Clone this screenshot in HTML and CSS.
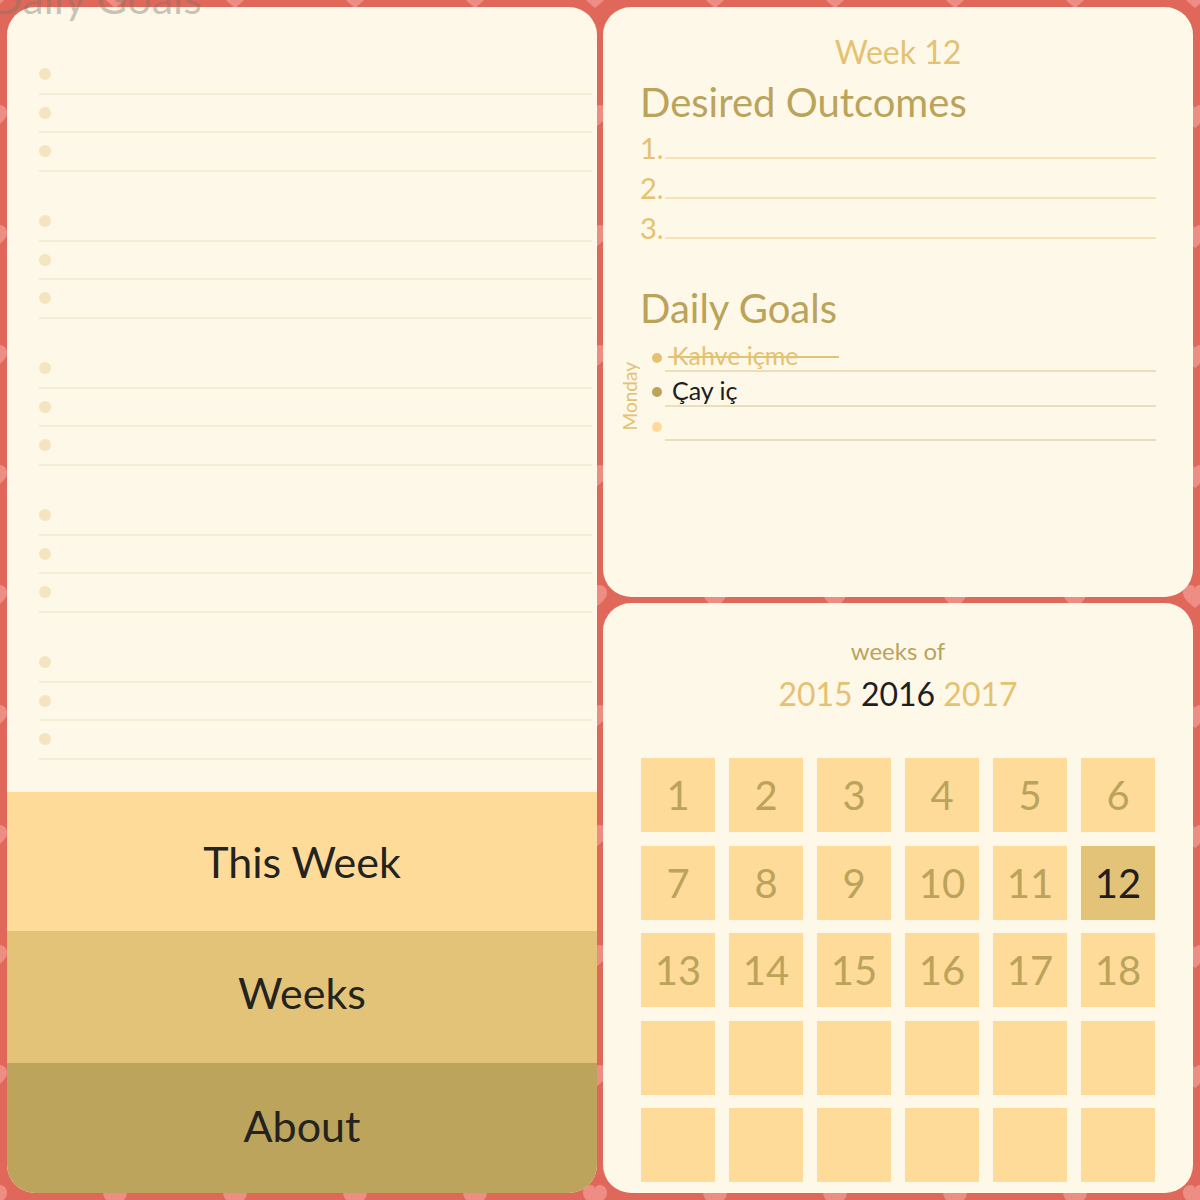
FILE: index.html
```html
<!DOCTYPE html>
<html lang="tr">
<head>
<meta charset="utf-8">
<title>Weekly Planner</title>
<link rel="stylesheet" href="styles.css">
</head>
<body>
<svg class="hearts" width="1200" height="1200" aria-hidden="true">
  <defs>
    <pattern id="heart-tile" width="120" height="120" patternUnits="userSpaceOnUse" x="-65" y="-63">
      <path d="M60 71 C54.5 66.5 48 62 48 55.5 C48 50.8 51.8 48 55.6 48 C57.8 48 59.2 49.4 60 51.2 C60.8 49.4 62.2 48 64.4 48 C68.2 48 72 50.8 72 55.5 C72 62 65.5 66.5 60 71 Z" fill="#ED8D84"/>
    </pattern>
  </defs>
  <rect width="1200" height="1200" fill="url(#heart-tile)"/>
</svg>

<main class="board">
  <div class="ghost-title">Daily Goals</div>

  <section class="card card-left">
    <div class="day-list">
      <div class="day-group">
        <div class="day-row"><span class="dot"></span></div>
        <div class="day-row"><span class="dot"></span></div>
        <div class="day-row"><span class="dot"></span></div>
      </div>
      <div class="day-group">
        <div class="day-row"><span class="dot"></span></div>
        <div class="day-row"><span class="dot"></span></div>
        <div class="day-row"><span class="dot"></span></div>
      </div>
      <div class="day-group">
        <div class="day-row"><span class="dot"></span></div>
        <div class="day-row"><span class="dot"></span></div>
        <div class="day-row"><span class="dot"></span></div>
      </div>
      <div class="day-group">
        <div class="day-row"><span class="dot"></span></div>
        <div class="day-row"><span class="dot"></span></div>
        <div class="day-row"><span class="dot"></span></div>
      </div>
      <div class="day-group">
        <div class="day-row"><span class="dot"></span></div>
        <div class="day-row"><span class="dot"></span></div>
        <div class="day-row"><span class="dot"></span></div>
      </div>
    </div>
    <nav class="menu">
      <div class="menu-item menu-this">This Week</div>
      <div class="menu-item menu-weeks">Weeks</div>
      <div class="menu-item menu-about">About</div>
    </nav>
  </section>

  <section class="card card-week">
    <h2 class="week-title">Week 12</h2>
    <h1 class="section-title">Desired Outcomes</h1>
    <div class="outcomes">
      <div class="outcome-row"><span class="outcome-num">1.</span><span class="outcome-line"></span></div>
      <div class="outcome-row"><span class="outcome-num">2.</span><span class="outcome-line"></span></div>
      <div class="outcome-row"><span class="outcome-num">3.</span><span class="outcome-line"></span></div>
    </div>
    <h1 class="section-title goals-title">Daily Goals</h1>
    <div class="goals">
      <div class="day-label">Monday</div>
      <div class="goal-list">
        <div class="goal-row">
          <span class="goal-dot goal-dot-done"></span>
          <div class="goal-line"><span class="goal-text goal-done">Kahve içme</span></div>
        </div>
        <div class="goal-row">
          <span class="goal-dot goal-dot-active"></span>
          <div class="goal-line"><span class="goal-text">Çay iç</span></div>
        </div>
        <div class="goal-row">
          <span class="goal-dot goal-dot-empty"></span>
          <div class="goal-line"><span class="goal-text"></span></div>
        </div>
      </div>
    </div>
  </section>

  <section class="card card-weeks">
    <div class="weeks-of">weeks of</div>
    <div class="years">
      <span class="year">2015</span>
      <span class="year year-current">2016</span>
      <span class="year">2017</span>
    </div>
    <div class="week-grid">
      <div class="week-cell">1</div>
      <div class="week-cell">2</div>
      <div class="week-cell">3</div>
      <div class="week-cell">4</div>
      <div class="week-cell">5</div>
      <div class="week-cell">6</div>
      <div class="week-cell">7</div>
      <div class="week-cell">8</div>
      <div class="week-cell">9</div>
      <div class="week-cell">10</div>
      <div class="week-cell">11</div>
      <div class="week-cell week-current">12</div>
      <div class="week-cell">13</div>
      <div class="week-cell">14</div>
      <div class="week-cell">15</div>
      <div class="week-cell">16</div>
      <div class="week-cell">17</div>
      <div class="week-cell">18</div>
      <div class="week-cell"></div>
      <div class="week-cell"></div>
      <div class="week-cell"></div>
      <div class="week-cell"></div>
      <div class="week-cell"></div>
      <div class="week-cell"></div>
      <div class="week-cell"></div>
      <div class="week-cell"></div>
      <div class="week-cell"></div>
      <div class="week-cell"></div>
      <div class="week-cell"></div>
      <div class="week-cell"></div>
    </div>
  </section>
</main>
</body>
</html>
```

FILE: styles.css
```css
* {
  box-sizing: border-box;
}

html, body {
  margin: 0;
  padding: 0;
}

body {
  background: #E0685A;
  font-family: Lato, "Open Sans", "DejaVu Sans", sans-serif;
  width: 1200px;
  height: 1200px;
  overflow: hidden;
  position: relative;
}

.hearts {
  position: absolute;
  left: 0;
  top: 0;
  z-index: 0;
}

.board {
  position: relative;
  z-index: 1;
  width: 1200px;
  height: 1200px;
  padding: 7px;
  display: grid;
  grid-template-columns: 590px 590px;
  grid-template-rows: 590px 590px;
  gap: 6px;
}

.card {
  background: #FEF8E9;
  border-radius: 28px;
  overflow: hidden;
}

/* ghost heading scrolled under the top edge */
.ghost-title {
  position: absolute;
  left: -10px;
  top: -28px;
  font-size: 43px;
  line-height: 1.2;
  color: rgba(120, 118, 105, 0.42);
  z-index: 3;
  white-space: nowrap;
}

/* left card */
.card-left {
  grid-row: 1 / span 2;
  display: flex;
  flex-direction: column;
}

.day-list {
  flex: 1;
  padding: 49px 5px 0 32px;
}

.day-group {
  margin-bottom: 31.5px;
}

.day-row {
  height: 38.5px;
  display: flex;
  align-items: center;
  border-bottom: 2px solid #F5EDD6;
}

.dot {
  width: 12px;
  height: 12px;
  border-radius: 50%;
  background: #F4E4BF;
}

.menu {
  display: flex;
  flex-direction: column;
}

.menu-item {
  display: flex;
  align-items: center;
  justify-content: center;
  font-size: 43px;
  color: #23231F;
}

.menu-this {
  height: 139px;
  background: #FFDB9A;
}

.menu-weeks {
  height: 132px;
  padding-bottom: 10px;
  background: #E3C377;
}

.menu-about {
  height: 130px;
  padding-bottom: 6px;
  background: #BCA45C;
}

/* top right card */
.card-week {
  padding: 26.4px 37px 0 37px;
}

.week-title {
  margin: 0;
  font-weight: 400;
  font-size: 32px;
  line-height: 1.2;
  text-align: center;
  color: #E4C271;
}

.section-title {
  margin: 6.7px 0 0 0;
  font-weight: 400;
  font-size: 40px;
  line-height: 1.2;
  color: #BBA35A;
}

.outcomes {
  margin-top: 4.7px;
}

.outcome-row {
  height: 40px;
  display: flex;
  align-items: baseline;
}

.outcome-num {
  width: 25px;
  font-size: 29px;
  line-height: 1.2;
  color: #E4C271;
}

.outcome-line {
  flex: 1;
  height: 2px;
  background: #F6E2B6;
}

.goals-title {
  margin-top: 33.3px;
}

.goals {
  display: flex;
  margin-top: 5.5px;
  margin-left: -19px;
}

.day-label {
  writing-mode: vertical-rl;
  transform: rotate(180deg);
  font-size: 19px;
  line-height: 17px;
  width: 17px;
  color: #E4C271;
  align-self: flex-end;
  margin-bottom: 11px;
}

.goal-list {
  flex: 1;
  margin-left: 14px;
}

.goal-row {
  height: 34.5px;
  display: flex;
  align-items: flex-end;
}

.goal-dot {
  width: 10px;
  height: 10px;
  border-radius: 50%;
  margin: 0 3px 9.5px 0;
  flex: none;
}

.goal-dot-done {
  background: #E4C271;
}

.goal-dot-active {
  background: #BBA35A;
}

.goal-dot-empty {
  background: #FFD99A;
}

.goal-line {
  flex: 1;
  height: 34.5px;
  display: flex;
  align-items: flex-end;
  padding-left: 7px;
  border-bottom: 2px solid #E9DFBA;
}

.goal-text {
  font-size: 25px;
  line-height: 1.2;
  color: #202020;
}

.goal-done {
  position: relative;
  color: #E4C271;
}

.goal-done::after {
  content: "";
  position: absolute;
  left: -4px;
  right: -41px;
  top: 16px;
  height: 2px;
  background: #E4C271;
}

/* bottom right card */
.card-weeks {
  padding: 33.5px 38px 0 38px;
}

.weeks-of {
  text-align: center;
  font-size: 24px;
  line-height: 1.2;
  color: #BBA35A;
}

.years {
  margin-top: 9.7px;
  text-align: center;
  font-size: 32px;
  line-height: 1.2;
  color: #E4C271;
}

.year-current {
  color: #1F1F1F;
}

.week-grid {
  margin-top: 44.7px;
  display: grid;
  grid-template-columns: repeat(6, 74px);
  grid-auto-rows: 74px;
  column-gap: 14px;
  row-gap: 13.5px;
}

.week-cell {
  background: #FFDB9A;
  display: flex;
  align-items: center;
  justify-content: center;
  font-size: 40px;
  color: #BBA35A;
}

.week-current {
  background: #E3C377;
  color: #1F1F1F;
}
```
